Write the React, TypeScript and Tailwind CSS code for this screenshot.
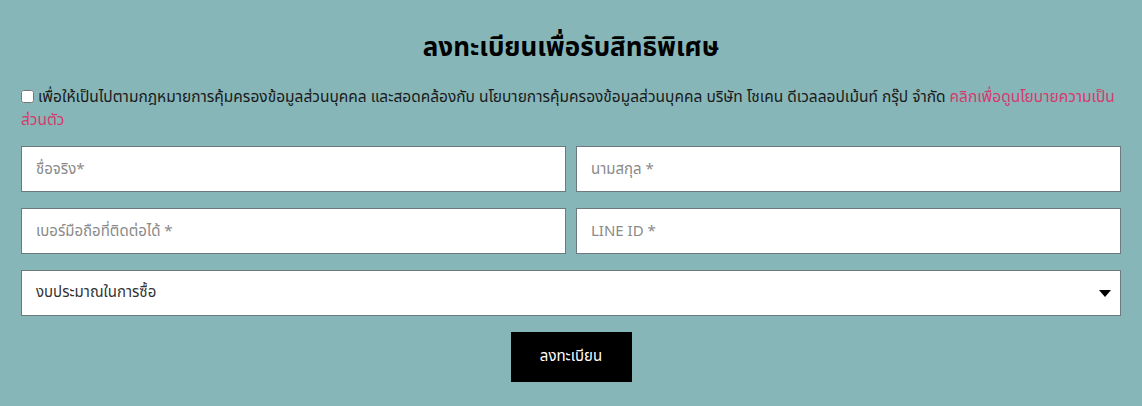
import React, { useState } from 'react';

const fieldCls =
  'w-full h-[46px] px-[14px] bg-white border border-[#6c7a7d] text-[15px] text-[#333] placeholder:text-[#8a8a8a] outline-none';

export default function App() {
  const [agree, setAgree] = useState(false);

  return (
    <div className="w-full min-h-[406px] bg-[#86b6b8] font-['Noto_Sans_Thai','Noto_Sans','Liberation_Sans',sans-serif]">
      <div className="w-[1100px] mx-auto pt-[29px]">
        <h2 className="text-center text-[26px] font-bold text-black leading-[38px]">ลงทะเบียนเพื่อรับสิทธิพิเศษ</h2>

        <div className="mt-[19px] text-[15.5px] leading-[23px] text-[#1a1a1a]">
          <label className="inline">
            <input
              type="checkbox"
              checked={agree}
              onChange={(e) => setAgree(e.target.checked)}
              className="w-[13px] h-[13px] mr-[4px] align-[-1px]"
            />
            เพื่อให้เป็นไปตามกฎหมายการคุ้มครองข้อมูลส่วนบุคคล และสอดคล้องกับ นโยบายการคุ้มครองข้อมูลส่วนบุคคล บริษัท โชเคน ดีเวลลอปเม้นท์ กรุ๊ป จำกัด{' '}
          </label>
          <a href="#" className="text-[#d63a6e]">คลิกเพื่อดูนโยบายความเป็น<span className="inline-block">ส่วนตัว</span></a>
        </div>

        <form className="mt-[14px] flex flex-col gap-[16px]" onSubmit={(e) => e.preventDefault()}>
          <div className="grid grid-cols-2 gap-[10px]">
            <input type="text" placeholder="ชื่อจริง*" className={fieldCls} />
            <input type="text" placeholder="นามสกุล *" className={fieldCls} />
          </div>
          <div className="grid grid-cols-2 gap-[10px]">
            <input type="text" placeholder="เบอร์มือถือที่ติดต่อได้ *" className={fieldCls} />
            <input type="text" placeholder="LINE ID *" className={fieldCls} />
          </div>
          <div className="relative">
            <select className={fieldCls + ' appearance-none text-[#111] pr-10'} defaultValue="">
              <option value="">งบประมาณในการซื้อ</option>
              <option value="1">ต่ำกว่า 3 ล้านบาท</option>
              <option value="2">3 - 5 ล้านบาท</option>
              <option value="3">มากกว่า 5 ล้านบาท</option>
            </select>
            <svg className="absolute right-[10px] top-[20px] pointer-events-none" width="12" height="7" viewBox="0 0 12 7">
              <path d="M0 0h12L6 7z" fill="#000" />
            </svg>
          </div>
          <div className="flex justify-center">
            <button type="submit" className="w-[121px] h-[50px] bg-black text-white text-[15px]">
              ลงทะเบียน
            </button>
          </div>
        </form>
      </div>
    </div>
  );
}
